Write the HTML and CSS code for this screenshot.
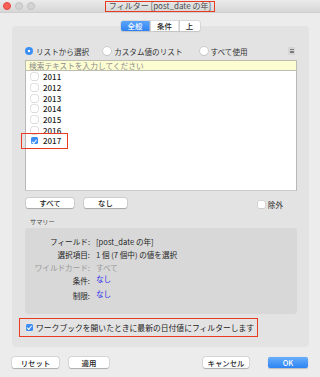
FILE: index.html
```html
<!DOCTYPE html>
<html lang="ja">
<head>
  <meta charset="UTF-8">
  <meta name="viewport" content="width=device-width, initial-scale=1.0">
  <title>フィルター [post_date の年]</title>
  <link rel="stylesheet" href="styles.css">
</head>
<body>
  <div class="window">
    <header class="titlebar">
      <div class="lights">
        <span class="light red"></span>
        <span class="light"></span>
        <span class="light"></span>
      </div>
      <div class="title">フィルター [post_date の年]</div>
    </header>

    <nav class="tabs">
      <span class="tab active">全般</span>
      <span class="tab">条件</span>
      <span class="tab small">上</span>
    </nav>

    <section class="panel">
      <div class="radios">
        <label class="radio"><span class="dot on"></span>リストから選択</label>
        <label class="radio"><span class="dot"></span>カスタム値のリスト</label>
        <label class="radio"><span class="dot"></span>すべて使用</label>
        <span class="menu-btn"><i></i><i></i><i></i></span>
      </div>

      <div class="search">検索テキストを入力してください</div>
      <ul class="values">
        <li><span class="check"></span>2011</li>
        <li><span class="check"></span>2012</li>
        <li><span class="check"></span>2013</li>
        <li><span class="check"></span>2014</li>
        <li><span class="check"></span>2015</li>
        <li><span class="check"></span>2016</li>
        <li class="picked"><span class="check on"></span>2017<span class="mark"></span></li>
      </ul>

      <div class="list-actions">
        <button class="btn w48">すべて</button>
        <button class="btn w43">なし</button>
        <label class="exclude"><span class="check"></span>除外</label>
      </div>

      <div class="summary-label">サマリー</div>
      <div class="summary">
        <div class="row"><span class="key">フィールド:</span><span>[post_date の年]</span></div>
        <div class="row"><span class="key">選択項目:</span><span>1 個 (7 個中) の値を選択</span></div>
        <div class="row muted"><span class="key">ワイルドカード:</span><span>すべて</span></div>
        <div class="row tall"><span class="key">条件:</span><span class="link">なし</span></div>
        <div class="row taller"><span class="key">制限:</span><span class="link">なし</span></div>
      </div>

      <label class="auto-row"><span class="check on"></span>ワークブックを開いたときに最新の日付値にフィルターします</label>
    </section>

    <footer class="footer">
      <button class="btn w47">リセット</button>
      <button class="btn w40">適用</button>
      <span class="spacer"></span>
      <button class="btn w46">キャンセル</button>
      <button class="btn ok">OK</button>
    </footer>
  </div>
</body>
</html>
```

FILE: styles.css
```css
* {
  box-sizing: border-box;
}
body {
  margin: 0;
  background: #ececec;
  font-family: "Noto Sans CJK JP", "Noto Sans", sans-serif;
  color: #262626;
  font-size: 7.6px;
}
.window {
  width: 320px;
  height: 377px;
  overflow: hidden;
}
.titlebar {
  position: relative;
  height: 13px;
  background: linear-gradient(#ebebeb, #d6d6d6);
  border-bottom: 1px solid #cfcfcf;
  display: flex;
  align-items: center;
  justify-content: center;
}
.lights {
  position: absolute;
  left: 3px;
  top: 2px;
  display: flex;
  gap: 4px;
}
.light {
  width: 8px;
  height: 8px;
  border-radius: 50%;
  background: #d3d3d3;
  border: 0.5px solid #c2c2c2;
}
.light.red {
  background: #fc5f57;
  border-color: #e2463f;
}
.title {
  border: 1.5px solid #ea3b22;
  padding: 0 3px;
  height: 11px;
  line-height: 8px;
  font-size: 8px;
  color: #4a4a4a;
  margin-top: 1px;
}
.tabs {
  display: flex;
  justify-content: center;
  margin: 8px 0 -5px;
  position: relative;
  z-index: 1;
}
.tab {
  width: 29px;
  height: 10px;
  line-height: 10px;
  text-align: center;
  background: #fff;
  font-size: 7.4px;
  font-weight: 500;
  color: #222;
  box-shadow: 0 0 0 0.5px #c8c8c8, 0 0.5px 1px rgba(0,0,0,0.15);
}
.tab + .tab {
  border-left: 0.5px solid #d0d0d0;
}
.tab.small {
  width: 21px;
  border-radius: 0 2px 2px 0;
}
.tab.active {
  background: linear-gradient(#5ba4f9, #2f82f2);
  color: #fff;
  border-radius: 2px 0 0 2px;
}
.panel {
  margin: 0 11px 0 12px;
  background: #e3e3e3;
  border-radius: 4px;
  padding: 20px 12px 10px 13px;
}
.radios {
  display: flex;
  align-items: center;
  height: 10px;
}
.radio {
  display: flex;
  align-items: center;
  gap: 3px;
  margin-right: 14px;
  color: #333;
}
.radio:nth-child(2) {
  margin-right: 17px;
}
.dot {
  width: 8px;
  height: 8px;
  border-radius: 50%;
  background: #fff;
  box-shadow: 0 0 0 0.5px #b5b5b5, 0 0.5px 1px rgba(0,0,0,0.15);
}
.dot.on {
  background: radial-gradient(circle, #fff 0 1.3px, #3b8ef5 1.6px);
  box-shadow: none;
}
.menu-btn {
  margin-left: auto;
  margin-right: 2px;
  width: 7px;
  height: 8px;
  background: #d6d6d6;
  border-radius: 1px;
  display: flex;
  flex-direction: column;
  justify-content: center;
  gap: 1px;
  padding: 0 1.5px;
}
.menu-btn i {
  height: 0.7px;
  background: #7a7a7a;
}
.search {
  margin-top: 4px;
  height: 11px;
  line-height: 9px;
  padding-left: 3px;
  background: #fdfdd2;
  border: 1px solid #bdbdb2;
  color: #8c8c8c;
  font-size: 7.7px;
}
.values {
  list-style: none;
  margin: 0;
  padding: 0.5px 0 0;
  height: 120px;
  background: #fff;
  border: 1px solid #b8b8b8;
  border-top: none;
  border-bottom-color: #c9c9c9;
}
.values li {
  position: relative;
  display: flex;
  align-items: center;
  gap: 5px;
  height: 10.7px;
  padding-left: 5px;
  font-size: 8px;
  font-weight: 500;
  color: #1f1f1f;
}
.check {
  width: 7px;
  height: 7px;
  border-radius: 1.5px;
  background: #fff;
  box-shadow: 0 0 0 0.5px #c4c4c4, 0 0.5px 0.5px rgba(0,0,0,0.1);
  display: inline-flex;
  align-items: center;
  justify-content: center;
}
.check.on {
  background: #3c8cf2;
  box-shadow: none;
}
.check.on::after {
  content: "";
  width: 1.6px;
  height: 3.5px;
  border: solid #fff;
  border-width: 0 1px 1px 0;
  transform: translate(0, -0.5px) rotate(40deg);
}
.mark {
  position: absolute;
  left: -5px;
  top: -3px;
  width: 47px;
  height: 16px;
  border: 1.5px solid #ea3b22;
}
.list-actions {
  display: flex;
  align-items: center;
  gap: 10px;
  margin-top: 6px;
  height: 11px;
  padding-left: 1px;
}
.btn {
  font: inherit;
  font-size: 7.4px;
  font-weight: 500;
  color: #222;
  height: 10px;
  line-height: 10px;
  padding: 0;
  border: none;
  border-radius: 2px;
  background: #fff;
  box-shadow: 0 0 0 0.5px rgba(0,0,0,0.15), 0 0.5px 1px rgba(0,0,0,0.2);
}
.w48 { width: 48px; }
.w43 { width: 43px; }
.w47 { width: 47px; }
.w40 { width: 40px; }
.w46 { width: 46px; }
.exclude {
  margin-left: auto;
  margin-right: 14px;
  display: flex;
  align-items: center;
  gap: 3px;
  margin-top: 3px;
}
.summary-label {
  margin: 10px 0 0 5px;
  height: 8px;
  line-height: 8px;
  font-size: 6.2px;
  color: #444;
}
.summary {
  margin-top: 2px;
  height: 86px;
  background: #d8d8d8;
  border-radius: 3px;
  padding-top: 8px;
}
.row {
  display: flex;
  gap: 6px;
  height: 13px;
  line-height: 12px;
  color: #262626;
}
.row.tall {
  height: 15px;
}
.row.taller {
  height: 16px;
}
.key {
  width: 65px;
  text-align: right;
}
.row.muted {
  color: #9a9a9a;
}
.link {
  color: #2a2ae8;
  margin-top: -2px;
}
.auto-row {
  margin: 4px 0 0 -6px;
  width: 239px;
  height: 19px;
  display: flex;
  align-items: center;
  gap: 3px;
  padding-left: 6px;
  border: 1.5px solid #ea3b22;
  font-size: 7.8px;
  color: #222;
}
.footer {
  display: flex;
  align-items: center;
  gap: 10px;
  margin: 10px 12px 0;
  height: 11px;
}
.footer .btn {
  height: 11px;
  line-height: 11px;
}
.spacer {
  flex: 1;
}
.btn.ok {
  width: 40px;
  margin-left: 9px;
  background: linear-gradient(#68aefb, #2c83f3);
  color: #fff;
  box-shadow: 0 0.5px 1px rgba(0,0,0,0.2);
}
```
